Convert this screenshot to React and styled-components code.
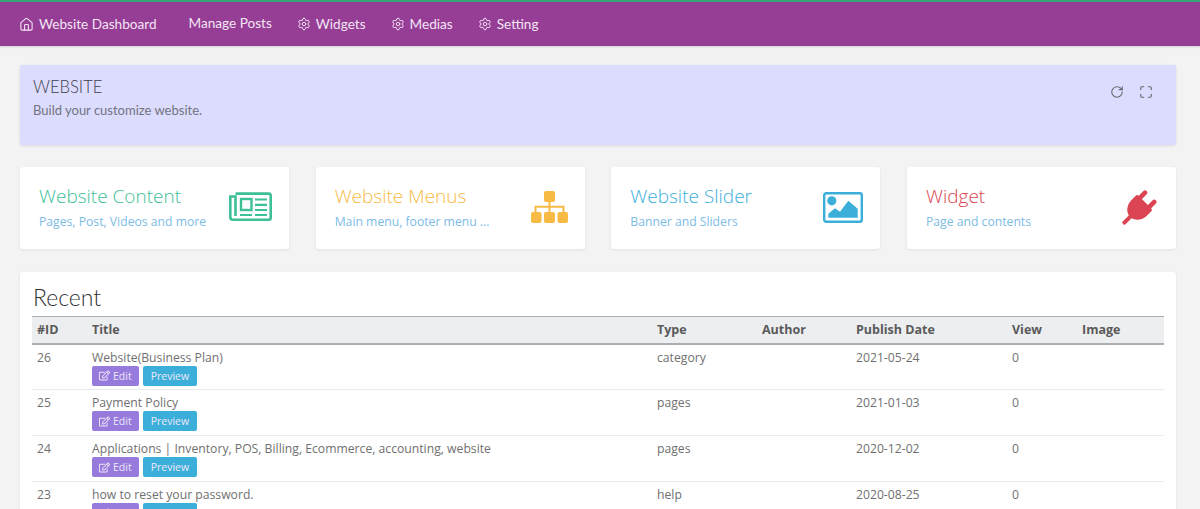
import React from 'react';
import styled, { createGlobalStyle } from 'styled-components';
import { Home, Settings, RotateCw, Maximize } from 'lucide-react';
import { FaRegEdit } from 'react-icons/fa';

const GlobalStyle = createGlobalStyle`
  html, body {
    margin: 0;
    padding: 0;
    height: 509px;
    overflow: hidden;
    background: #f3f3f3;
    font-family: "Open Sans", "Liberation Sans", sans-serif;
    color: #555;
  }
  * { box-sizing: border-box; }
`;

const Navbar = styled.nav`
  height: 46px;
  border-top: 2px solid #35a67a;
  background: #963d96;
  display: flex;
  align-items: center;
  padding-left: 19px;
  box-shadow: 0 1px 2px rgba(0, 0, 0, 0.15);
`;

const NavItem = styled.a`
  display: flex;
  align-items: center;
  gap: 5px;
  margin-right: ${props => props.$gap}px;
  color: #f3e6f3;
  font-family: Lato, "Open Sans", sans-serif;
  font-size: 13.6px;
  white-space: nowrap;
  position: relative;
  top: ${props => (props.$raised ? -1 : 0)}px;
`;

const Page = styled.main`
  padding: 19px 24px 0 20px;
`;

const Banner = styled.section`
  height: 80px;
  background: #dcdcff;
  border-radius: 2px;
  padding: 12px 13px;
  display: flex;
  justify-content: space-between;
  box-shadow: 0 1px 3px rgba(0, 0, 0, 0.1);
`;

const BannerTitle = styled.h1`
  margin: 0;
  font-family: Lato, "Open Sans", sans-serif;
  font-size: 16.6px;
  font-weight: 300;
  line-height: 20px;
  color: #3f3f4c;
`;

const BannerText = styled.p`
  margin: 5px 0 0;
  font-family: Lato, "Open Sans", sans-serif;
  font-size: 13px;
  line-height: 16px;
  color: #737380;
`;

const BannerTools = styled.div`
  display: flex;
  gap: 15px;
  padding: 8px 10px 0 0;
  color: #66666e;
`;

const CardGrid = styled.section`
  display: grid;
  grid-template-columns: repeat(4, 269px);
  justify-content: space-between;
  margin-top: 22px;
`;

const Card = styled.a`
  height: 82px;
  background: #fff;
  border-radius: 3px;
  padding: 17px 17px 0 19px;
  display: flex;
  justify-content: space-between;
  box-shadow: 0 1px 3px rgba(0, 0, 0, 0.08);
`;

const CardTitle = styled.div`
  font-size: 19px;
  font-weight: 300;
  line-height: 25px;
  color: ${props => props.$color};
`;

const CardText = styled.div`
  margin-top: 4px;
  font-size: 12.2px;
  line-height: 18px;
  color: #7dbce6;
`;

const CardIcon = styled.div`
  display: flex;
  align-items: center;
  height: 46px;
  color: ${props => props.$color};
`;

const RecentPanel = styled.section`
  margin-top: 23px;
  background: #fff;
  border-radius: 3px;
  padding: 12px 12px 0;
  box-shadow: 0 1px 3px rgba(0, 0, 0, 0.08);
`;

const RecentTitle = styled.h2`
  margin: 0;
  padding: 0 0 5px 1px;
  font-family: Lato, "Open Sans", sans-serif;
  font-size: 23px;
  font-weight: 300;
  line-height: 27px;
  color: #333;
`;

const Table = styled.table`
  width: 100%;
  table-layout: fixed;
  border-collapse: collapse;
  font-size: 12.2px;
`;

const HeadCell = styled.th`
  width: ${props => props.$width}px;
  height: 27px;
  padding: 0 5px;
  text-align: left;
  font-size: 12.5px;
  font-weight: 700;
  color: #5a5a5a;
  background: #eceef0;
  border-top: 1px solid #a9afb5;
  border-bottom: 2px solid #a9afb5;
`;

const Row = styled.tr`
  height: 46px;
  border-bottom: 1px solid #e9ecef;
`;

const Cell = styled.td`
  padding: 4px 5px 0;
  vertical-align: top;
  line-height: 17px;
  color: #707070;
`;

const Actions = styled.div`
  display: flex;
  gap: 4px;
`;

const ActionButton = styled.button`
  display: flex;
  align-items: center;
  gap: 3px;
  height: 20px;
  padding: 0 ${props => props.$pad}px;
  border: 0;
  border-radius: 2px;
  background: ${props => props.$color};
  color: #eee8f8;
  font-family: inherit;
  font-size: 10.5px;
`;

const NewspaperIcon = () => (
  <svg width="43" height="30" viewBox="0 0 43 30" fill="none" stroke="currentColor" strokeWidth="2.6">
    <path d="M6.5 1.6h33.6a1.6 1.6 0 0 1 1.6 1.6v22.6a2 2 0 0 1-2 2H4a2.7 2.7 0 0 1-2.7-2.7V4.5h5.2V24" />
    <rect x="12" y="7" width="10.5" height="11" strokeWidth="2.4" />
    <path d="M26 7.5h12M26 12.8h12M26 18h12M11 23h12M26 23h12" strokeWidth="2.2" />
  </svg>
);

const SitemapIcon = () => (
  <svg width="37" height="32" viewBox="0 0 37 32" fill="currentColor">
    <rect x="13" y="0" width="11" height="11" rx="2" />
    <rect x="0" y="21" width="10.5" height="11" rx="2" />
    <rect x="13" y="21" width="11" height="11" rx="2" />
    <rect x="26.5" y="21" width="10.5" height="11" rx="2" />
    <path d="M17.5 11h2v3.8h14v6.2h-2v-4.2h-12V21h-2v-4.2h-12V21h-2v-6.2h14z" />
  </svg>
);

const PictureIcon = () => (
  <svg width="40" height="31" viewBox="0 0 40 31" fill="currentColor">
    <rect x="1.2" y="1.2" width="37.6" height="28.6" rx="2" fill="none" stroke="currentColor" strokeWidth="2.4" />
    <circle cx="8.8" cy="8.8" r="4.6" />
    <path d="M5.3 25.8v-4l6.7-5.5 5 3.4 8.3-11 9.4 8v9.1z" />
  </svg>
);

const PlugIcon = () => (
  <svg width="38" height="38" viewBox="0 0 38 38" fill="currentColor" style={{ overflow: 'visible' }}>
    <g transform="rotate(45 19 19)">
      <rect x="10.2" y="3" width="4.6" height="13" rx="2.3" />
      <rect x="23.2" y="3" width="4.6" height="13" rx="2.3" />
      <path d="M10 12h18a2 2 0 0 1 2 2v6a11 13 0 0 1-22 0v-6a2 2 0 0 1 2-2z" />
      <rect x="17" y="30" width="4" height="13" rx="1.5" />
    </g>
  </svg>
);

const navItems = [
  { label: 'Widgets', gap: 25 },
  { label: 'Medias', gap: 25 },
  { label: 'Setting', gap: 0 },
];

const cards = [
  { title: 'Website Content', text: 'Pages, Post, Videos and more', color: '#3dbf98', icon: <NewspaperIcon /> },
  { title: 'Website Menus', text: 'Main menu, footer menu ...', color: '#f7bb45', icon: <SitemapIcon /> },
  { title: 'Website Slider', text: 'Banner and Sliders', color: '#3bafda', icon: <PictureIcon /> },
  { title: 'Widget', text: 'Page and contents', color: '#da4453', icon: <PlugIcon /> },
];

const posts = [
  { id: 26, title: 'Website(Business Plan)', type: 'category', date: '2021-05-24' },
  { id: 25, title: 'Payment Policy', type: 'pages', date: '2021-01-03' },
  { id: 24, title: 'Applications | Inventory, POS, Billing, Ecommerce, accounting, website', type: 'pages', date: '2020-12-02' },
  { id: 23, title: 'how to reset your password.', type: 'help', date: '2020-08-25' },
];

const columns = [
  { label: '#ID', width: 55 },
  { label: 'Title', width: 565 },
  { label: 'Type', width: 105 },
  { label: 'Author', width: 94 },
  { label: 'Publish Date', width: 156 },
  { label: 'View', width: 70 },
  { label: 'Image' },
];

export default function App() {
  return (
    <>
      <GlobalStyle />
      <Navbar>
        <NavItem $gap={32}><Home size={15} strokeWidth={1.7} />Website Dashboard</NavItem>
        <NavItem $gap={25} $raised>Manage Posts</NavItem>
        {navItems.map(item => (
          <NavItem key={item.label} $gap={item.gap}>
            <Settings size={14} strokeWidth={1.7} />
            {item.label}
          </NavItem>
        ))}
      </Navbar>
      <Page>
        <Banner>
          <div>
            <BannerTitle>WEBSITE</BannerTitle>
            <BannerText>Build your customize website.</BannerText>
          </div>
          <BannerTools>
            <RotateCw size={14} strokeWidth={1.9} />
            <Maximize size={14} strokeWidth={1.9} />
          </BannerTools>
        </Banner>
        <CardGrid>
          {cards.map(({ title, text, color, icon }) => (
            <Card key={title}>
              <div>
                <CardTitle $color={color}>{title}</CardTitle>
                <CardText>{text}</CardText>
              </div>
              <CardIcon $color={color}>{icon}</CardIcon>
            </Card>
          ))}
        </CardGrid>
        <RecentPanel>
          <RecentTitle>Recent</RecentTitle>
          <Table>
            <thead>
              <tr>
                {columns.map(col => (
                  <HeadCell key={col.label} $width={col.width}>{col.label}</HeadCell>
                ))}
              </tr>
            </thead>
            <tbody>
              {posts.map(post => (
                <Row key={post.id}>
                  <Cell>{post.id}</Cell>
                  <Cell>
                    {post.title}
                    <Actions>
                      <ActionButton $color="#967adc" $pad={7}><FaRegEdit size={11} />Edit</ActionButton>
                      <ActionButton $color="#3bafda" $pad={8}>Preview</ActionButton>
                    </Actions>
                  </Cell>
                  <Cell>{post.type}</Cell>
                  <Cell />
                  <Cell>{post.date}</Cell>
                  <Cell>0</Cell>
                  <Cell />
                </Row>
              ))}
            </tbody>
          </Table>
        </RecentPanel>
      </Page>
    </>
  );
}
